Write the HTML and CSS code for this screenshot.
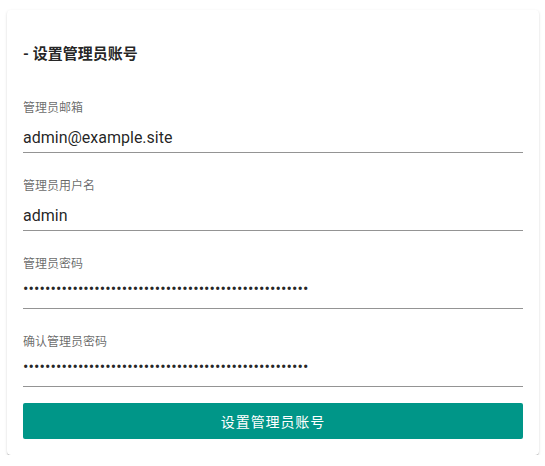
FILE: index.html
```html
<!DOCTYPE html>
<html lang="zh-CN">
<head>
<meta charset="utf-8">
<title>设置管理员账号</title>
<link rel="stylesheet" href="styles.css">
</head>
<body>
<form class="card">
  <h2 class="card-title">- 设置管理员账号</h2>
  <div class="field">
    <label class="field-label" for="email">管理员邮箱</label>
    <input class="field-input" id="email" type="text" value="admin@example.site">
  </div>
  <div class="field">
    <label class="field-label" for="user">管理员用户名</label>
    <input class="field-input" id="user" type="text" value="admin">
  </div>
  <div class="field">
    <label class="field-label" for="pass">管理员密码</label>
    <input class="field-input field-secret" id="pass" type="password" value="abcdefghijklmnopqrstuvwxyzabcdefghijklmnopqrstuvwxyz">
  </div>
  <div class="field">
    <label class="field-label" for="pass2">确认管理员密码</label>
    <input class="field-input field-secret" id="pass2" type="password" value="abcdefghijklmnopqrstuvwxyzabcdefghijklmnopqrstuvwxyz">
  </div>
  <button class="submit" type="button">设置管理员账号</button>
</form>
</body>
</html>
```

FILE: styles.css
```css
html, body {
  background: #ffffff;
}
body {
  margin: 0;
  padding: 10px 6px 0 7px;
  font-family: Roboto, "Noto Sans CJK SC", sans-serif;
}
.card {
  display: flex;
  flex-direction: column;
  background: #fff;
  border-radius: 4px;
  padding: 32px 16px 16px;
  box-shadow: 0 2px 1px -1px rgba(0,0,0,.2), 0 1px 1px 0 rgba(0,0,0,.14), 0 1px 3px 0 rgba(0,0,0,.12);
}
.card-title {
  margin: 0;
  font-size: 15px;
  line-height: 24px;
  font-weight: 700;
  color: rgba(0,0,0,.87);
}
.field {
  display: flex;
  flex-direction: column;
  margin-top: 25px;
}
.card-title + .field {
  margin-top: 34px;
}
.field-label {
  font-size: 12px;
  line-height: 16px;
  color: rgba(0,0,0,.6);
}
.field-input {
  margin-top: 11px;
  box-sizing: border-box;
  width: 100%;
  height: 26px;
  padding: 0 0 5px;
  border: 0;
  border-bottom: 1px solid rgba(0,0,0,.42);
  outline: none;
  background: transparent;
  font-family: Roboto, "Noto Sans CJK SC", sans-serif;
  font-size: 16px;
  line-height: 20px;
  color: rgba(0,0,0,.87);
}
.field-secret {
  letter-spacing: 0.09px;
  padding-bottom: 14px;
}
.submit {
  margin-top: 16px;
  height: 36px;
  border: 0;
  border-radius: 2px;
  background: #009688;
  color: #fff;
  font-family: Roboto, "Noto Sans CJK SC", sans-serif;
  font-size: 14px;
  letter-spacing: 0.9px;
  cursor: pointer;
}
```
